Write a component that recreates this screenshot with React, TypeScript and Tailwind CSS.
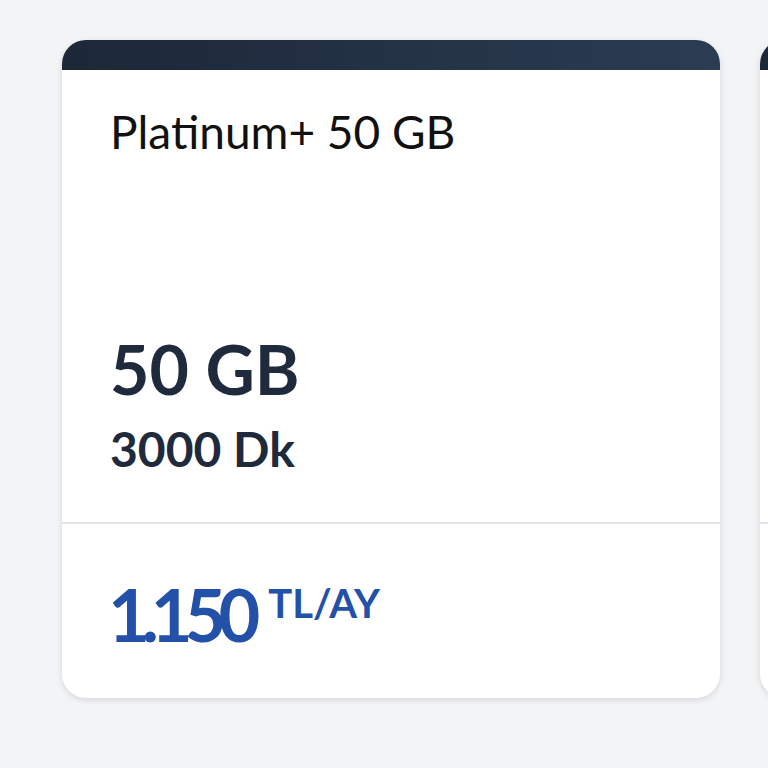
type Plan = {
  name: string;
  data: string;
  minutes: string;
  price: string;
};

const plans: Plan[] = [
  { name: 'Platinum+ 50 GB', data: '50 GB', minutes: '3000 Dk', price: '1.150' },
];

function PlanCard({ plan }: { plan?: Plan }) {
  return (
    <div className="shrink-0 w-[658px] h-[658px] flex flex-col bg-white rounded-[24px] overflow-hidden shadow-[0_2px_6px_rgba(0,0,0,0.12)]">
      <div className="h-[30px] bg-gradient-to-r from-[#1c2738] to-[#2b3d52]" />
      <div className="flex-1 flex flex-col justify-between px-[48px] pt-[34px] pb-[44px]">
        <div className="text-[46px] leading-[1.2] text-[#111]">{plan?.name}</div>
        <div className="flex flex-col gap-[11px] text-[#1f2a3c] font-bold">
          <div className="text-[68px] leading-[1.2]">{plan?.data}</div>
          <div className="text-[48px] leading-[1.2]">{plan?.minutes}</div>
        </div>
      </div>
      <div className="h-[2px] bg-[#e3e5e9]" />
      <div className="h-[174px] flex items-start px-[46px] pt-[47px] text-[#2350a8] font-bold">
        {plan && (
          <>
            <span className="text-[72px] leading-[1.2] tracking-[-8px]">{plan.price}</span>
            <span className="ml-[16px] mt-[12px] text-[40px] leading-none">TL/AY</span>
          </>
        )}
      </div>
    </div>
  );
}

export default function App() {
  return (
    <div className="w-[768px] h-[768px] overflow-hidden bg-[#f3f4f6] font-['Lato',sans-serif]">
      <div className="flex gap-[40px] pt-[40px] pl-[62px]">
        {plans.map((p) => (
          <PlanCard key={p.name} plan={p} />
        ))}
        {/* next card peeking in from the right */}
        <PlanCard />
      </div>
    </div>
  );
}
